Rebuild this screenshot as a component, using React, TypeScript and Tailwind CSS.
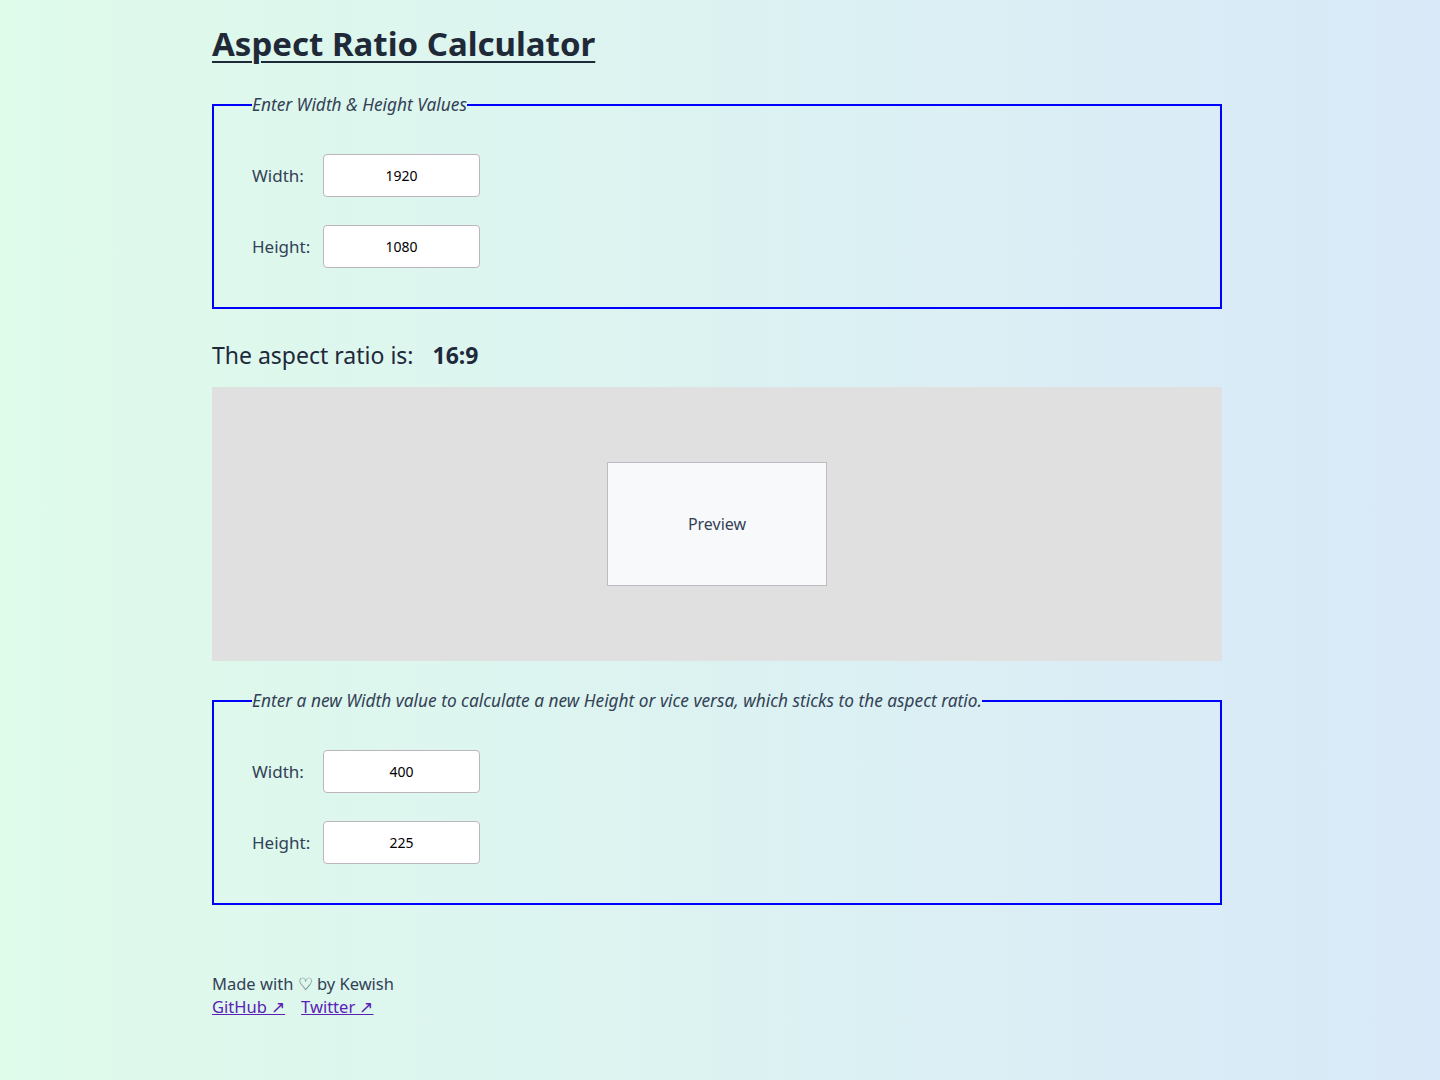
import { useState } from "react";

const FONT = "font-['Noto_Sans','Open_Sans',sans-serif]";

type RowProps = {
  label: string;
  value: string;
  onChange: (v: string) => void;
};

// one label + input line inside a fieldset
const FieldRow = ({ label, value, onChange }: RowProps) => (
  <div className="flex items-center">
    <label className="w-[71px] text-[17px] text-[#334155]">{label}</label>
    <input
      type="text"
      value={value}
      onChange={(e) => onChange(e.target.value)}
      className="h-[43px] w-[157px] rounded-[4px] border border-[#bdb5bd] bg-white text-center text-[14px] text-black outline-none"
    />
  </div>
);

type BoxProps = {
  legend: string;
  rows: RowProps[];
};

const ValuesBox = ({ legend, rows }: BoxProps) => (
  <fieldset className="border-2 border-[#0000ff] px-[38px] pb-[39px] pt-[36px]">
    <legend className="px-0 text-[17.3px] italic text-[#334155]">{legend}</legend>
    <div className="flex flex-col gap-[28px]">
      {rows.map((r) => (
        <FieldRow key={r.label} {...r} />
      ))}
    </div>
  </fieldset>
);

export default function App() {
  const [w, setW] = useState("1920");
  const [h, setH] = useState("1080");
  const [nw, setNw] = useState("400");
  const [nh, setNh] = useState("225");

  return (
    <div
      className={`${FONT} min-h-[1080px] w-full bg-gradient-to-r from-[#dffbea] to-[#d9e9f9] text-[#1e293b]`}
    >
      <div className="ml-[212px] w-[1010px] pt-[22px]">
        <h1 className="text-[33px] font-bold leading-[44px] text-[#1f2937] underline decoration-[2px] underline-offset-[5px]">
          Aspect Ratio Calculator
        </h1>

        <div className="mt-[26px]">
          <ValuesBox
            legend="Enter Width & Height Values"
            rows={[
              { label: "Width:", value: w, onChange: setW },
              { label: "Height:", value: h, onChange: setH },
            ]}
          />
        </div>

        <p className="mt-[30px] flex items-center text-[23px] leading-[32px] text-[#1e293b]">
          The aspect ratio is:
          <span className="ml-[19px] font-bold">16:9</span>
        </p>

        <div className="mt-[16px] flex h-[274px] items-center justify-center bg-[#e0e0e0]">
          <div className="flex h-[124px] w-[220px] items-center justify-center border border-[#c2b9c2] bg-[#f8f9fb] text-[16px] text-[#334155]">
            Preview
          </div>
        </div>

        <div className="mt-[27px]">
          <ValuesBox
            legend="Enter a new Width value to calculate a new Height or vice versa, which sticks to the aspect ratio."
            rows={[
              { label: "Width:", value: nw, onChange: setNw },
              { label: "Height:", value: nh, onChange: setNh },
            ]}
          />
        </div>

        <footer className="mt-[67px] text-[16.5px] leading-[23px] text-[#334155]">
          <p>Made with ♡ by Kewish</p>
          <div className="flex gap-[16px] text-[#5b21b6]">
            <a href="#" className="underline">
              GitHub ↗
            </a>
            <a href="#" className="underline">
              Twitter ↗
            </a>
          </div>
        </footer>
      </div>
    </div>
  );
}
